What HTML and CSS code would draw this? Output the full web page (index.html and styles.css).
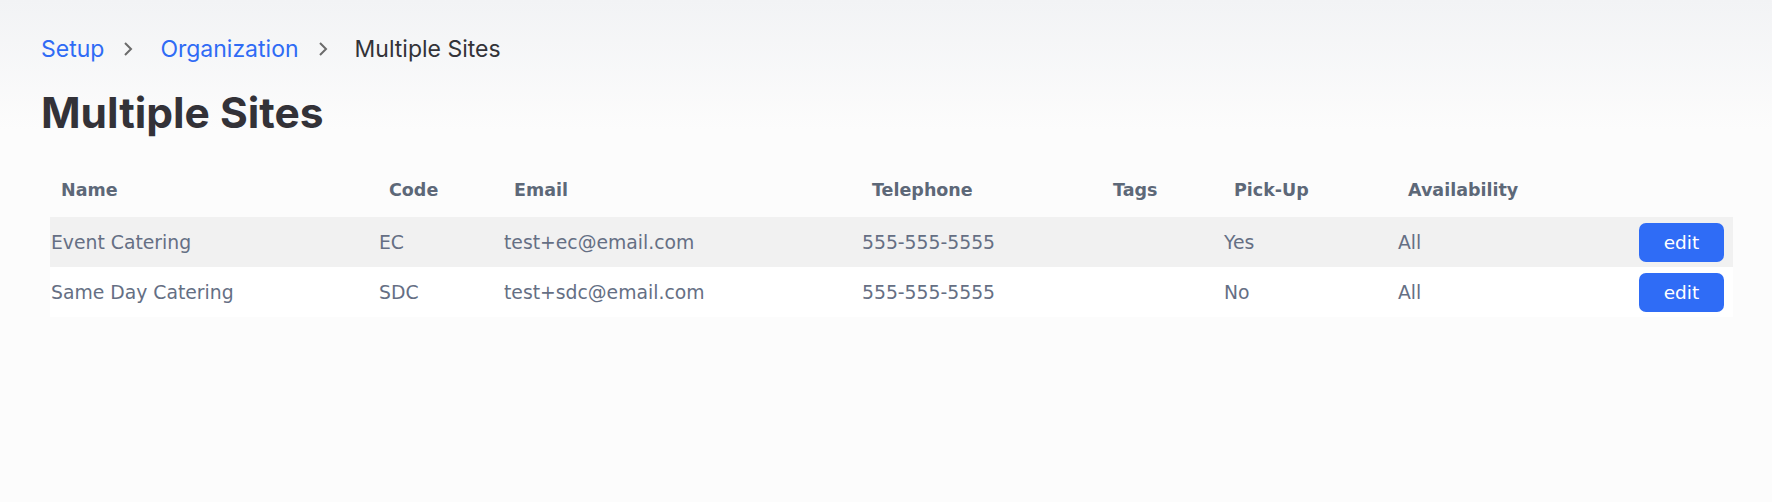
FILE: index.html
```html
<!DOCTYPE html>
<html>
<head>
	<meta charset="utf-8">
	<title>Multiple Sites</title>
	<link rel="stylesheet" href="styles.css">
</head>
<body>
	<div class="page">
		<nav class="crumbs">
			<a href="#">Setup</a>
			<svg class="chev" width="10" height="16" viewBox="0 0 10 16"><path d="M2 2l6 6-6 6" fill="none" stroke="#6b6b6b" stroke-width="2"/></svg>
			<a href="#">Organization</a>
			<svg class="chev" width="10" height="16" viewBox="0 0 10 16"><path d="M2 2l6 6-6 6" fill="none" stroke="#6b6b6b" stroke-width="2"/></svg>
			<span class="here">Multiple Sites</span>
		</nav>

		<h1 class="title">Multiple Sites</h1>

		<table class="sites">
			<colgroup>
				<col style="width: 328px">
				<col style="width: 125px">
				<col style="width: 358px">
				<col style="width: 241px">
				<col style="width: 121px">
				<col style="width: 174px">
				<col>
			</colgroup>
			<thead>
				<tr>
					<th>Name</th>
					<th>Code</th>
					<th>Email</th>
					<th>Telephone</th>
					<th>Tags</th>
					<th>Pick-Up</th>
					<th>Availability</th>
					<th></th>
				</tr>
			</thead>
			<tbody>
				<tr class="odd">
					<td>Event Catering</td>
					<td>EC</td>
					<td>test+ec@email.com</td>
					<td>555-555-5555</td>
					<td></td>
					<td>Yes</td>
					<td>All</td>
					<td class="act"><button class="btn">edit</button></td>
				</tr>
				<tr>
					<td>Same Day Catering</td>
					<td>SDC</td>
					<td>test+sdc@email.com</td>
					<td>555-555-5555</td>
					<td></td>
					<td>No</td>
					<td>All</td>
					<td class="act"><button class="btn">edit</button></td>
				</tr>
			</tbody>
		</table>
	</div>
</body>
</html>
```

FILE: styles.css
```css
* {margin: 0; padding: 0; box-sizing: border-box;}
html, body {height: 100%;}
body {background: #fcfcfc linear-gradient(#f2f3f5, #fcfcfc 130px) no-repeat; font-family: Inter, "Noto Sans", sans-serif;}

.page {padding: 35px 39px 0 41px;}

.crumbs {display: flex; align-items: center; height: 28px; font-size: 23px; line-height: 28px;}
.crumbs a {color: #2f6bf5; text-decoration: none;}
.crumbs .chev {margin: 0 27px 0 19px;}
.crumbs .here {color: #333338;}

.title {margin-top: 24px; font-size: 42.5px; line-height: 52px; font-weight: 700; color: #333238;}

.sites {margin: 24px 0 0 9px; width: 1683px; table-layout: fixed; border-collapse: collapse; font-family: "DejaVu Sans", Verdana, sans-serif;}
.sites th {height: 54px; padding: 0 0 0 11px; text-align: left; font-size: 17.5px; font-weight: 700; color: #5d6878;}
.sites td {height: 50px; padding: 0 0 0 1px; background: #fff; font-size: 18.8px; color: #656f84; white-space: nowrap;}
.sites tr.odd td {background: #f1f1f1;}
.sites td.act {text-align: right; padding-right: 9px;}

.btn {width: 85px; height: 39px; border: 0; border-radius: 7px; background: #2f6cf6; color: #fff; font-family: "DejaVu Sans", Verdana, sans-serif; font-size: 18.5px; vertical-align: middle;}
```
